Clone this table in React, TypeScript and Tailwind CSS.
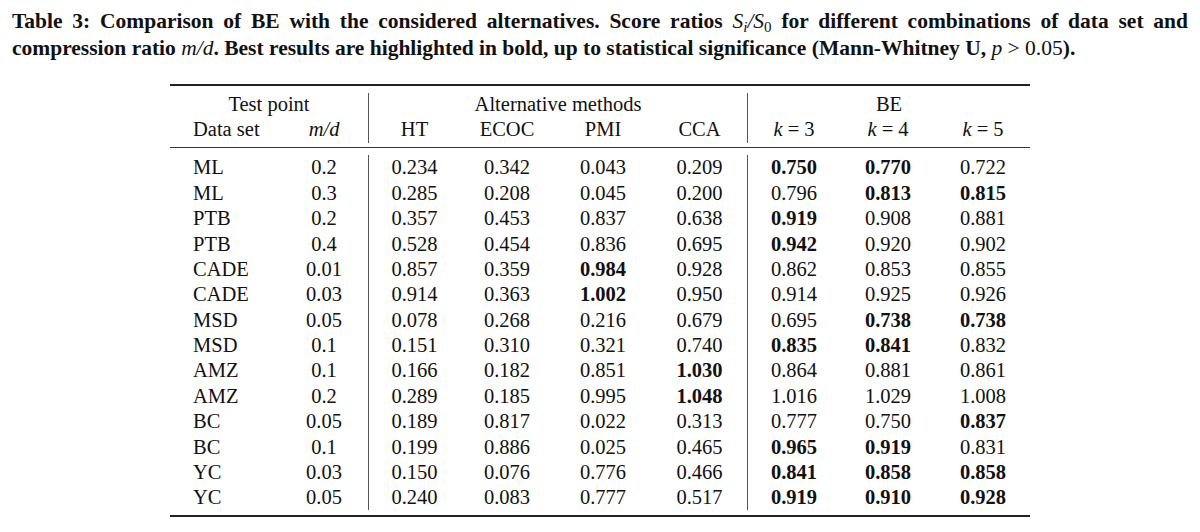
import { Fragment } from 'react';

// rows: data set, m/d, then HT, ECOC, PMI, CCA, k=3, k=4, k=5 ("*" = bold)
const rows: [string, string, string[]][] = [
  ['ML', '0.2', ['0.234', '0.342', '0.043', '0.209', '*0.750', '*0.770', '0.722']],
  ['ML', '0.3', ['0.285', '0.208', '0.045', '0.200', '0.796', '*0.813', '*0.815']],
  ['PTB', '0.2', ['0.357', '0.453', '0.837', '0.638', '*0.919', '0.908', '0.881']],
  ['PTB', '0.4', ['0.528', '0.454', '0.836', '0.695', '*0.942', '0.920', '0.902']],
  ['CADE', '0.01', ['0.857', '0.359', '*0.984', '0.928', '0.862', '0.853', '0.855']],
  ['CADE', '0.03', ['0.914', '0.363', '*1.002', '0.950', '0.914', '0.925', '0.926']],
  ['MSD', '0.05', ['0.078', '0.268', '0.216', '0.679', '0.695', '*0.738', '*0.738']],
  ['MSD', '0.1', ['0.151', '0.310', '0.321', '0.740', '*0.835', '*0.841', '0.832']],
  ['AMZ', '0.1', ['0.166', '0.182', '0.851', '*1.030', '0.864', '0.881', '0.861']],
  ['AMZ', '0.2', ['0.289', '0.185', '0.995', '*1.048', '1.016', '1.029', '1.008']],
  ['BC', '0.05', ['0.189', '0.817', '0.022', '0.313', '0.777', '0.750', '*0.837']],
  ['BC', '0.1', ['0.199', '0.886', '0.025', '0.465', '*0.965', '*0.919', '0.831']],
  ['YC', '0.03', ['0.150', '0.076', '0.776', '0.466', '*0.841', '*0.858', '*0.858']],
  ['YC', '0.05', ['0.240', '0.083', '0.777', '0.517', '*0.919', '*0.910', '*0.928']],
];

const cols = 'grid grid-cols-[110px_88px_92px_94px_98px_95px_93px_96px_94px]';
const vline = 'border-l border-[#555]';

function Cell({ v, line }: { v: string; line?: boolean }) {
  const bold = v.startsWith('*');
  return (
    <div className={`flex items-center justify-center ${line ? vline : ''} ${bold ? 'font-bold' : ''}`}>
      {bold ? v.slice(1) : v}
    </div>
  );
}

export default function App() {
  return (
    <div className="h-[532px] w-[1200px] bg-white text-[#111] font-['Liberation_Serif',serif]">
      {/* Caption */}
      <div className="pl-[12px] pt-[8px] text-[21.5px] leading-[27px] font-bold">
        <div className="w-[1176px] text-justify [text-align-last:justify]">
          Table 3: Comparison of BE with the considered alternatives. Score ratios{' '}
          <span className="font-normal italic">S<sub className="text-[15px]">i</sub>/S<sub className="text-[15px] not-italic">0</sub></span>{' '}
          for different combinations of data set and
        </div>
        <div>
          compression ratio <span className="font-normal italic">m/d</span>. Best results are highlighted in bold, up to
          statistical significance (Mann-Whitney U, <span className="font-normal italic">p</span>
          <span className="font-normal"> &gt; 0.05</span>).
        </div>
      </div>

      {/* Table */}
      <div className="ml-[170px] mt-[22px] w-[860px] text-[20.5px]">
        <div className="h-[2px] bg-[#222]" />

        <div className={`${cols} mt-[7px] grid-rows-[22px_28px]`}>
          <div className="col-span-2 flex items-center justify-center">Test point</div>
          <div className={`col-span-4 flex items-center justify-center ${vline}`}>Alternative methods</div>
          <div className={`col-span-3 flex items-center justify-center ${vline}`}>BE</div>

          <div className="flex items-center pl-[23px]">Data set</div>
          <div className="flex items-center justify-center italic">m/d</div>
          <Cell v="HT" line />
          <Cell v="ECOC" />
          <Cell v="PMI" />
          <Cell v="CCA" />
          {['3', '4', '5'].map((k, i) => (
            <div key={k} className={`flex items-center justify-center ${i === 0 ? vline : ''}`}>
              <span className="italic">k</span>&nbsp;=&nbsp;{k}
            </div>
          ))}
        </div>

        <div className="mt-[4px] h-px bg-[#333]" />

        <div className={`${cols} mt-[7px] auto-rows-[25.4px]`}>
          {rows.map(([name, md, vals], r) => (
            <Fragment key={r}>
              <div className="flex items-center pl-[23px]">{name}</div>
              <div className="flex items-center justify-center">{md}</div>
              {vals.map((v, i) => (
                <Cell key={i} v={v} line={i === 0 || i === 4} />
              ))}
            </Fragment>
          ))}
        </div>

        <div className="mt-[5px] h-[2px] bg-[#222]" />
      </div>
    </div>
  );
}
